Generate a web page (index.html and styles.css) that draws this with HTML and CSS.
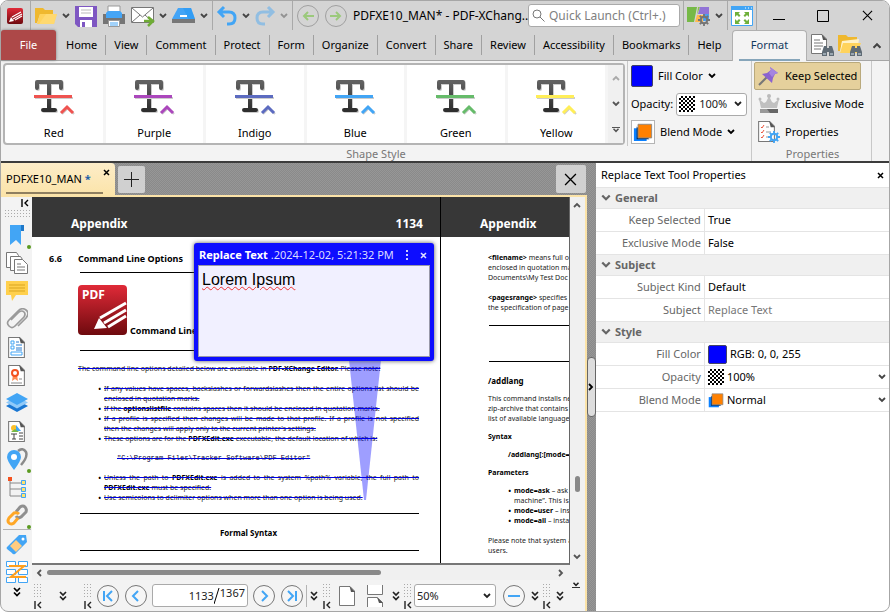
FILE: index.html
```html
<!DOCTYPE html>
<html lang="en">
  <head>
    <meta charset="UTF-8" />
    <meta name="viewport" content="width=device-width, initial-scale=1.0" />
    <title>PDFXE10_MAN* - PDF-XChange Editor</title>
    <link rel="stylesheet" href="styles.css">
  </head>
  <body>
    <!-- shared icons -->
    <svg class="defs" width="0" height="0" aria-hidden="true">
      <linearGradient id="ink" x1="0" y1="0" x2="0" y2="1">
        <stop offset="0" stop-color="#616161"/><stop offset="1" stop-color="#2e2e2e"/>
      </linearGradient>
      <linearGradient id="red" x1="0" y1="0" x2="0" y2="1">
        <stop offset="0" stop-color="#e02a38"/><stop offset="1" stop-color="#6e0a0e"/>
      </linearGradient>
      <symbol id="chev" viewBox="0 0 8 6"><path d="M1 1l3 3 3-3" fill="none" stroke="currentColor" stroke-width="1.8"/></symbol>
      <symbol id="dchev" viewBox="0 0 8 10"><path d="M1 1l3 3 3-3M1 5.500l3 3 3-3" fill="none" stroke="currentColor" stroke-width="1.7"/></symbol>
      <symbol id="first" viewBox="0 0 8 8"><path d="M1 0v8M7 1L4 4l3 3" fill="none" stroke="currentColor" stroke-width="1.4"/></symbol>
      <symbol id="cross" viewBox="0 0 12 12"><path d="M1 1l10 10M11 1L1 11" fill="none" stroke="currentColor" stroke-width="1.2"/></symbol>
      <symbol id="cross-small" viewBox="0 0 7 7"><path d="M1 1l5 5M6 1L1 6" fill="none" stroke="currentColor" stroke-width="1.5"/></symbol>
      <symbol id="glyph" viewBox="0 0 42 38">
        <g fill="none" stroke-linecap="round" stroke-linejoin="round">
          <path d="M4 10V4h24v6M16 4v28M10 32h12" transform="translate(1 1)" stroke="#ccc" stroke-width="4"/>
          <path d="M4 10V4h24v6M16 4v28M10 32h12" stroke="url(#ink)" stroke-width="4"/>
        </g>
        <path d="M2 20h38M29 36l6-6 6 6" fill="none" stroke="#ccc" stroke-width="2"/>
        <path d="M1 18.500h38M28 35l6-6 6 6" fill="none" stroke="currentColor" stroke-width="3"/>
      </symbol>
      <symbol id="binoc" viewBox="0 0 12 11">
        <path d="M2 1h3v2h2V1h3l2 6v4H7V7H5v4H0V7z" fill="#5f6b75"/><path d="M1 8h3v2H1zM8 8h3v2H8z" fill="#9aa7b1"/>
      </symbol>
      <symbol id="page" viewBox="0 0 16 20">
        <path d="M.5.5H11L15.500 5v14.500H.5z" fill="#fff" stroke="#777"/><path d="M10.500 0L16 6h-4z" fill="#555"/>
      </symbol>
      <symbol id="gear" viewBox="0 0 12 12">
        <circle cx="6" cy="6" r="3.200" fill="none" stroke="currentColor" stroke-width="2"/>
        <path d="M6 0v2.500M6 9.500V12M0 6h2.500M9.500 6H12M1.800 1.800l1.700 1.700M8.500 8.500l1.700 1.700M10.200 1.800L8.500 3.500M3.500 8.500l-1.700 1.700" stroke="currentColor" stroke-width="1.800"/>
      </symbol>
      <symbol id="blend" viewBox="0 0 22 22">
        <path d="M1 7h14v14H1z" fill="#0a80ff"/><path d="M4 5v14h14z" fill="#0b3060"/><path d="M5.500 2.500h15v15h-15z" fill="#ff8000" stroke="#888"/>
      </symbol>
    </svg>

    <div class="window">
      <!-- title bar -->
      <header class="titlebar">
        <a href="#" class="brand" aria-label="PDF-XChange Editor">
          <svg width="16" height="16" viewBox="0 0 16 16"><rect width="16" height="16" rx="2" fill="url(#red)"/><path d="M2 14l2-5 3 4z" fill="#fff"/><path d="M5 9l9-5M6 11l9-5M8 12l7-4" stroke="#fff" stroke-width="1.200" fill="none"/></svg>
        </a>
        <div class="quick">
          <button class="tool" aria-label="Open"><svg width="24" height="22" viewBox="0 0 24 22"><path d="M1 3h8l2 2h8v4H6L3 18H1z" fill="#efb82e"/><path d="M6 9h17l-3 10H3z" fill="#ffd35c"/><path d="M12 9h11l-3 10H5z" fill="#ffdf83" opacity=".5"/></svg></button>
          <button class="drop" aria-label="Open options"><svg width="8" height="6"><use href="#chev"/></svg></button>
          <button class="tool" aria-label="Save"><svg width="24" height="24" viewBox="0 0 24 24"><path d="M1 2h22v21H4l-3-3z" fill="#7e57c2"/><path d="M5 3h14v10H5z" fill="#fff"/><path d="M7 6h10M7 9h10" stroke="#bbb"/><path d="M6 16h12v7H6z" fill="#fff"/><path d="M8 18h3v5H8z" fill="#7e57c2"/></svg></button>
          <button class="tool print" aria-label="Print"><svg width="24" height="24" viewBox="0 0 24 24"><path d="M6 2h12v7H6z" fill="#fff" stroke="#999"/><path d="M1 10h22v10H1z" fill="#757575"/><path d="M6 7h12l2 2v5H4V9z" fill="#45a5f5"/><path d="M6.500 16.500h11v6h-11z" fill="#fff" stroke="#999"/><path d="M8 19h8M8 21h8" stroke="#45a5f5"/></svg></button>
          <button class="tool" aria-label="Email"><svg width="25" height="22" viewBox="0 0 25 22"><path d="M1.500 2.500h22v15h-22z" fill="#fff" stroke="#777"/><path d="M2 3l10.500 9L23 3M2 17l8-7M23 17l-8-7" fill="none" stroke="#777"/><path d="M14 16h8M18 12l5 4-5 5" fill="none" stroke="#6fac35" stroke-width="2.500"/></svg></button>
          <button class="drop" aria-label="Email options"><svg width="8" height="6"><use href="#chev"/></svg></button>
          <button class="tool" aria-label="Scan"><svg width="25" height="20" viewBox="0 0 25 20"><path d="M7 2h13l4 11H1z" fill="#43a4f6"/><path d="M12 2h8l4 11-6 1z" fill="#2196f3" opacity=".5"/><path d="M9 10h7" stroke="#fff" stroke-width="2"/><path d="M1 13h23v4H1z" fill="#777"/></svg></button>
          <button class="drop" aria-label="Scan options"><svg width="8" height="6"><use href="#chev"/></svg></button>
        </div>
        <div class="quick">
          <button class="tool" aria-label="Undo"><svg width="22" height="22" viewBox="0 0 22 22"><path d="M8 2L3 7l5 5M4 7h9q6 0 6 6t-6 6h-2" fill="none" stroke="#42a5f5" stroke-width="3"/></svg></button>
          <button class="drop" aria-label="Undo history"><svg width="8" height="6"><use href="#chev"/></svg></button>
          <button class="tool faded" aria-label="Redo"><svg width="22" height="22" viewBox="0 0 22 22"><path d="M14 2l5 5-5 5M18 7H9q-6 0-6 6t6 6h2" fill="none" stroke="#42a5f5" stroke-width="3"/></svg></button>
          <button class="drop faded" aria-label="Redo history"><svg width="8" height="6"><use href="#chev"/></svg></button>
        </div>
        <div class="quick last">
          <button class="round" aria-label="Back"><svg width="12" height="10" viewBox="0 0 12 10"><path d="M12 5H2M6 1L2 5l4 4" fill="none" stroke="#9bc97b" stroke-width="2"/></svg></button>
          <button class="round" aria-label="Forward"><svg width="12" height="10" viewBox="0 0 12 10"><path d="M0 5h10M6 1l4 4-4 4" fill="none" stroke="#9bc97b" stroke-width="2"/></svg></button>
        </div>
        <div class="title">PDFXE10_MAN* - PDF-XChang..</div>
        <label class="search">
          <svg width="13" height="13" viewBox="0 0 13 13"><circle cx="5" cy="5" r="4" fill="none" stroke="#777"/><path d="M8 8l4.500 4.500" stroke="#777"/></svg>
          <input type="text" placeholder="Quick Launch (Ctrl+.)" aria-label="Quick Launch">
        </label>
        <div class="quick looks">
          <button class="tool" aria-label="UI options"><svg width="25" height="22" viewBox="0 0 25 22"><path d="M1 2h10L8 17H1z" fill="#76b947"/><path d="M12 2h2l-3 8z" fill="#8bc34a"/><path d="M14 2h9v7H12z" fill="#9173d6"/><path d="M11 10h6v7H9z" fill="#ffb74d"/><path d="M17 9h6v7h-6z" fill="#4a9ff0"/><svg x="12" y="9" width="12" height="12" color="#757575"><use href="#gear"/></svg></svg></button>
          <button class="drop" aria-label="UI options list"><svg width="8" height="6"><use href="#chev"/></svg></button>
        </div>
        <div class="quick">
          <button class="tool" aria-label="Full screen"><svg width="22" height="20" viewBox="0 0 22 20"><path d="M.5.5h21v19H.5z" fill="#fff" stroke="#42a5f5"/><path d="M0 0h22v4H0z" fill="#42a5f5"/><path d="M14 2h1M17 2h1M20 2h1" stroke="#fff"/><path d="M4 6h5L7.500 7.500l2 2L8 11 6 9l-2 2zM18 6h-5l1.500 1.500-2 2L14 11l2-2 2 2zM4 18h5l-1.500-1.500 2-2L8 13l-2 2-2-2zM18 18h-5l1.500-1.500-2-2L14 13l2 2 2-2z" fill="#6fb03a"/></svg></button>
        </div>
        <div class="winbuttons">
          <button aria-label="Minimize"><svg width="12" height="12"><path d="M0 9.500h12" stroke="#000"/></svg></button>
          <button aria-label="Maximize"><svg width="12" height="12"><path d="M.5.5h11v11H.5z" fill="none" stroke="#000"/></svg></button>
          <button aria-label="Close"><svg width="11" height="11"><use href="#cross"/></svg></button>
        </div>
      </header>

      <!-- ribbon tabs -->
      <nav class="tabs">
        <a href="#" class="file">File</a>
        <div class="tab-list">
          <a href="#">Home</a>
          <a href="#">View</a>
          <a href="#">Comment</a>
          <a href="#">Protect</a>
          <a href="#">Form</a>
          <a href="#">Organize</a>
          <a href="#">Convert</a>
          <a href="#">Share</a>
          <a href="#">Review</a>
          <a href="#">Accessibility</a>
          <a href="#">Bookmarks</a>
          <a href="#">Help</a>
        </div>
        <a href="#" class="active"><span>Format</span></a>
        <div class="tab-tools">
          <button class="tool" aria-label="Find"><svg width="24" height="22" viewBox="0 0 24 22"><svg width="16" height="20"><use href="#page"/></svg><path d="M3 6h6M3 9h9M3 12h9M3 15h7" stroke="#777"/><svg x="11" y="11" width="12" height="11"><use href="#binoc"/></svg></svg></button>
          <button class="tool" aria-label="Search files"><svg width="24" height="22" viewBox="0 0 24 22"><path d="M0 1h8l2 2h9v5H4l-2 9H0z" fill="#efb82e"/><path d="M4 7l17-2-2 13H2z" fill="#fff2c8"/><path d="M5 9h18l-4 10H2z" fill="#ffd35c"/><svg x="12" y="11" width="12" height="11"><use href="#binoc"/></svg></svg></button>
          <button class="drop up" aria-label="Collapse ribbon"><svg width="10" height="7"><use href="#chev"/></svg></button>
        </div>
      </nav>

      <!-- ribbon -->
      <section class="ribbon">
        <div class="group styles">
          <div class="style-row">
            <div class="gallery">
              <button class="swatch red"><svg width="42" height="38"><use href="#glyph"/></svg>Red</button>
              <button class="swatch purple"><svg width="42" height="38"><use href="#glyph"/></svg>Purple</button>
              <button class="swatch indigo"><svg width="42" height="38"><use href="#glyph"/></svg>Indigo</button>
              <button class="swatch blue"><svg width="42" height="38"><use href="#glyph"/></svg>Blue</button>
              <button class="swatch green"><svg width="42" height="38"><use href="#glyph"/></svg>Green</button>
              <button class="swatch yellow"><svg width="42" height="38"><use href="#glyph"/></svg>Yellow</button>
              <div class="gallery-nav">
                <button class="up faded" aria-label="Previous styles"><svg width="8" height="6"><use href="#chev"/></svg></button>
                <button aria-label="Next styles"><svg width="8" height="6"><use href="#chev"/></svg></button>
                <button class="more" aria-label="All styles"><svg width="8" height="6"><use href="#chev"/></svg></button>
              </div>
            </div>
            <div class="paint">
              <button class="item"><span class="fill"></span>Fill Color<svg width="8" height="6"><use href="#chev"/></svg></button>
              <div class="opacity">
                <label for="opacity">Opacity:</label>
                <span class="combo">
                  <span class="checker"></span>
                  <select id="opacity"><option>100%</option></select>
                  <svg width="8" height="6"><use href="#chev"/></svg>
                </span>
              </div>
              <button class="item"><span class="blend"><svg width="20" height="20"><use href="#blend"/></svg></span>Blend Mode<svg width="8" height="6"><use href="#chev"/></svg></button>
            </div>
          </div>
          <div class="group-name">Shape Style</div>
        </div>
        <div class="group props">
          <div class="items">
            <button class="item pressed" aria-pressed="true"><svg width="22" height="20" viewBox="0 0 22 20"><path d="M1 19l8-8" stroke="#777" stroke-width="2"/><path d="M12 1l8 6-3 1-2 4-1 5L4 8l5-1 4-3z" fill="#8b63cf"/><path d="M12 1l8 6-3 1-3 3-3-4 2-3z" fill="#a584e0"/></svg>Keep Selected</button>
            <button class="item"><svg width="22" height="20" viewBox="0 0 22 20"><path d="M3 14L1 5l5 4 2-1 3-6 3 6 2 1 5-4-2 9z" fill="#c0c0c0"/><circle cx="11" cy="2" r="2" fill="#bbb"/><circle cx="2" cy="5" r="1.500" fill="#bbb"/><circle cx="20" cy="5" r="1.500" fill="#bbb"/><path d="M2 15h18v4H2z" fill="#999"/><path d="M9 15h11v4H12z" fill="#666"/></svg>Exclusive Mode</button>
            <button class="item"><svg width="22" height="22" viewBox="0 0 22 22"><svg width="17" height="21"><use href="#page"/></svg><path d="M3 6l1 1 2-3M3 11l1 1 2-3M3 16l1 1 2-3" stroke="#e9573f" fill="none"/><path d="M8 6h3M8 11h5M8 16h4" stroke="#999"/><svg x="10" y="10" width="12" height="12" color="#42a5f5"><use href="#gear"/></svg></svg>Properties</button>
          </div>
          <div class="group-name">Properties</div>
        </div>
      </section>

      <main class="work">
        <div class="docs">
          <div class="doc-tabs">
            <div class="doc-tab"><a href="#">PDFXE10_MAN <b>*</b></a><button aria-label="Close tab"><svg width="7" height="7"><use href="#cross-small"/></svg></button></div>
            <button class="square" aria-label="New tab"><svg width="15" height="15"><path d="M0 7.500h15M7.500 0v15" stroke="#222"/></svg></button>
            <button class="square close" aria-label="Close document"><svg width="13" height="13"><use href="#cross"/></svg></button>
          </div>
          <div class="doc-frame">
            <!-- side panes -->
            <aside class="panes">
              <button class="pin" aria-label="Hide bar"><svg width="8" height="8"><use href="#first"/></svg></button>
              <span class="dots wide"></span>
              <div class="pane-list">
                <button class="dot" aria-label="Bookmarks"><svg width="22" height="22" viewBox="0 0 22 22"><path d="M4 1h11v20l-5-5-6 5z" fill="#42a5f5"/><path d="M15 1h3v6h-3z" fill="#1f78c8"/></svg></button>
                <button aria-label="Thumbnails"><svg width="22" height="22" viewBox="0 0 22 22" fill="#fff" stroke="#777"><path d="M.5 15.500V.5h10l2 3v12z"/><path d="M4.500 18.500v-14h10l2 3v11z"/><path d="M8.500 21.500v-14h8l5 5v9z"/><path d="M11 12h4M11 15h8M11 18h8"/></svg></button>
                <button aria-label="Comments"><svg width="22" height="22" viewBox="0 0 22 22"><path d="M0 1h22v14H10l-4 6-1-6H0z" fill="#ffd04d"/><path d="M3 5h16M3 8h16M3 11h16" stroke="#d9a520"/></svg></button>
                <button aria-label="Attachments"><svg width="22" height="22" viewBox="0 0 22 22"><path d="M5 12l8-8q3-2 5 0t0 5l-9 9q-3 3-6 0t0-6l9-9q4-4 8-1t0 8l-8 8" fill="none" stroke="#9a9a9a" stroke-width="1.700"/></svg></button>
                <button aria-label="Fields"><svg width="17" height="21" viewBox="0 0 17 21"><svg width="17" height="21"><use href="#page"/></svg><path d="M3 4h3v3H3zM3 9h3v3H3zM3 15h11v3H3z" fill="none" stroke="#42a5f5"/><path d="M8 5h3M8 8h6M8 11h6M8 13h6" stroke="#2b7cd0"/></svg></button>
                <button aria-label="Signatures"><svg width="17" height="21" viewBox="0 0 17 21"><svg width="17" height="21"><use href="#page"/></svg><path d="M5 10l-1 6 3-2 3 2-1-6z" fill="#ff8a50"/><circle cx="7" cy="8" r="3" fill="#fff" stroke="#f4511e" stroke-width="2"/><path d="M11 14h3M3 18h11" stroke="#888"/></svg></button>
                <button aria-label="Layers"><svg width="22" height="20" viewBox="0 0 22 20"><path d="M0 13l11 6 11-6-11-6z" fill="#1976d2"/><path d="M0 9.500l11 6 11-6-11-6z" fill="#90caf9"/><path d="M0 6l11 6 11-6-11-6z" fill="#42a5f5"/></svg></button>
                <button aria-label="Content"><svg width="17" height="21" viewBox="0 0 17 21"><svg width="17" height="21"><use href="#page"/></svg><circle cx="6" cy="7" r="3" fill="#fbc02d"/><path d="M8 4l5 6H8z" fill="#42a5f5"/><path d="M3 11l4-3 4 3z" fill="#76b947"/><path d="M3 13h6M6 13v5M4 18h4M11 12h4M11 15h4M11 18h4" stroke="#444"/></svg></button>
                <button class="dot" aria-label="Destinations"><svg width="22" height="22" viewBox="0 0 22 22"><path d="M12 3q5-4 8 1 2 5-5 13" fill="none" stroke="#8a8a8a" stroke-width="2.500"/><path d="M8 22Q1 13 1 9a7 7 0 0 1 14 0q0 4-7 13z" fill="#42a5f5"/><circle cx="8" cy="9" r="3" fill="#fff"/></svg></button>
                <button aria-label="Model tree"><svg width="20" height="22" viewBox="0 0 20 22"><path d="M3 3v17h12M3 7h12M3 13h12" fill="none" stroke="#888"/><path d="M1 1h4v4H1z" fill="#f4511e"/><path d="M14.500 4.500h4v4h-4zM14.500 11.500h4v4h-4zM14.500 17.500h4v4h-4z" fill="#ffe36b" stroke="#42a5f5"/></svg></button>
                <button class="dot" aria-label="Links"><svg width="22" height="22" viewBox="0 0 22 22" fill="none" stroke-width="3"><path d="M10 8l4-5q3-2 5 0t1 5l-5 5q-3 2-5-1" stroke="#8f8f8f"/><path d="M12 14l-4 5q-3 2-5 0t0-5l5-5q3-1 5 1" stroke="#ffa726"/></svg></button>
              </div>
              <div class="pane-list more">
                <button aria-label="Tags"><svg width="22" height="22" viewBox="0 0 22 22"><path d="M1 14L13 2l7 0 1 7L9 21q-2 1-3-1l-5-4q-1-1 0-2z" fill="#42a5f5"/><path d="M4 13l6-6 6 6-6 6z" fill="#ffcc80"/><circle cx="17" cy="6" r="1.500" fill="#fff"/></svg></button>
                <button aria-label="Order"><svg width="22" height="22" viewBox="0 0 22 22"><path d="M.5.500h9v5h-9zM12.500.500h9v5h-9zM.5 8.500h9v5h-9zM12.500 8.500h9v5h-9zM.5 16.500h9v5h-9zM12.500 16.500h9v5h-9z" fill="#fff" stroke="#42a5f5"/><path d="M3 5h15L5 16h15" fill="none" stroke="#ff9f1c" stroke-width="2"/></svg></button>
              </div>
              <button class="drop" aria-label="More panes"><svg width="8" height="10"><use href="#dchev"/></svg></button>
            </aside>

            <div class="viewer">
              <div class="view-row">
                <!-- pages -->
                <div class="pages">
                  <article class="sheet left">
                    <div class="banner"><span>Appendix</span><span>1134</span></div>
                    <div class="body">
                      <h2><span>6.6</span>Command Line Options</h2>
                      <hr>
                      <h3>
                        <svg width="49" height="50" viewBox="0 0 49 50"><rect width="49" height="50" rx="4" fill="url(#red)"/><text x="4" y="14" class="logo-text">PDF</text><path d="M16 44l5-11 8 10z" fill="#fff"/><path d="M22 33l26-15M26 38l22-13M30 42l18-11" stroke="#fff" stroke-width="3"/></svg>
                        Command Line
                      </h3>
                      <hr>
                      <p class="struck intro">The command line options detailed below are available in <b>PDF-XChange Editor.</b> Please note:</p>
                      <ul class="struck">
                        <li><span class="full">If any values have spaces, backslashes or forwardslashes then the entire options list should be</span> enclosed in quotation marks.</li>
                        <li>If the <b>optionslistfile</b> contains spaces then it should be enclosed in quotation marks.</li>
                        <li><span class="full">If a profile is specified then changes will be made to that profile. If a profile is not specified</span> then the changes will apply only to the current printer's settings.</li>
                        <li>These options are for the <b>PDFXEdit.exe</b> executable, the default location of which is:</li>
                      </ul>
                      <code class="struck">"C:\Program Files\Tracker Software\PDF Editor"</code>
                      <ul class="struck">
                        <li><span class="full">Unless the path to <b>PDFXEdit.exe</b> is added to the system %path% variable, the full path to</span> <b>PDFXEdit.exe</b> must be specified.</li>
                        <li>Use semicolons to delimiter options when more than one option is being used.</li>
                      </ul>
                      <hr>
                      <h4>Formal Syntax</h4>
                      <hr>
                    </div>
                    <svg class="pointer" width="32" height="140" viewBox="0 0 32 140"><path d="M0 0h32L17 140h-2z" fill="#00f" fill-opacity=".38"/></svg>
                    <div class="note">
                      <div class="note-head">
                        <b>Replace Text</b><span>.2024-12-02, 5:21:32 PM</span>
                        <button aria-label="Note options"><svg width="3" height="11" fill="#ccf"><path d="M0 0h2v2H0zM0 4h2v2H0zM0 8h2v2H0z"/></svg></button>
                        <button aria-label="Close note"><svg width="7" height="7"><use href="#cross-small"/></svg></button>
                      </div>
                      <textarea aria-label="Note text">Lorem Ipsum</textarea>
                    </div>
                  </article>
                  <article class="sheet right">
                    <div class="banner"><span>Appendix</span></div>
                    <div class="body">
                      <p><b>&lt;filename&gt;</b> means full o<br>enclosed in quotation ma<br>Documents\My Test Doc</p>
                      <p><b>&lt;pagesrange&gt;</b> specifies<br>the specification of page</p>
                      <hr>
                      <hr>
                      <h5 class="cmd">/addlang</h5>
                      <p class="tight">This command installs ne<br>zip-archive that contains<br>list of available language</p>
                      <h5>Syntax</h5>
                      <h5 class="indent">/addlang[:[mode=</h5>
                      <h5>Parameters</h5>
                      <ul>
                        <li><b>mode=ask</b> – ask<br>machine”. This is</li>
                        <li><b>mode=user</b> – ins</li>
                        <li><b>mode=all</b> – insta</li>
                      </ul>
                      <p>Please note that system a<br>users.</p>
                    </div>
                  </article>
                </div>
                <div class="vscroll">
                  <button class="up" aria-label="Scroll up"><svg width="8" height="6"><use href="#chev"/></svg></button>
                  <span class="thumb"></span>
                  <button aria-label="Scroll down"><svg width="8" height="6"><use href="#chev"/></svg></button>
                </div>
              </div>
              <div class="hscroll">
                <button class="to-left" aria-label="Scroll left"><svg width="8" height="6"><use href="#chev"/></svg></button>
                <span class="track"><span class="thumb"></span></span>
                <button class="to-right" aria-label="Scroll right"><svg width="8" height="6"><use href="#chev"/></svg></button>
              </div>
              <!-- page navigation -->
              <footer class="status">
                <span class="grip"><i class="dots"></i><svg width="8" height="8"><use href="#first"/></svg></span>
                <button class="more wide" aria-label="More"><svg width="8" height="10"><use href="#dchev"/></svg></button>
                <span class="grip"><i class="dots"></i><svg width="8" height="8"><use href="#first"/></svg></span>
                <button class="round" aria-label="First page"><svg width="12" height="12"><path d="M2 1v10M10 1L5 6l5 5" fill="none" stroke="#42a5f5" stroke-width="2"/></svg></button>
                <button class="round" aria-label="Previous page"><svg width="12" height="12"><path d="M8 1L3 6l5 5" fill="none" stroke="#42a5f5" stroke-width="2"/></svg></button>
                <label class="page-box"><input type="text" value="1133" aria-label="Page"><svg width="6" height="16"><path d="M0 16L5 0" stroke="#000"/></svg><span>1367</span></label>
                <button class="round" aria-label="Next page"><svg width="12" height="12"><path d="M4 1l5 5-5 5" fill="none" stroke="#42a5f5" stroke-width="2"/></svg></button>
                <button class="round" aria-label="Last page"><svg width="12" height="12"><path d="M10 1v10M2 1l5 5-5 5" fill="none" stroke="#42a5f5" stroke-width="2"/></svg></button>
                <button class="more line" aria-label="More"><svg width="8" height="10"><use href="#dchev"/></svg></button>
                <span class="grip"><i class="dots"></i><svg width="8" height="8"><use href="#first"/></svg></span>
                <button class="layout" aria-label="Single page"><svg width="16" height="20"><use href="#page"/></svg></button>
                <button class="layout" aria-label="Continuous"><svg width="16" height="22"><path d="M.5 0v9.500h15V0M.5 22v-9.500H10l5.500 5V22" fill="#fff" stroke="#777"/><path d="M10 12l6 6h-4z" fill="#555"/></svg></button>
                <button class="more" aria-label="More"><svg width="8" height="10"><use href="#dchev"/></svg></button>
                <span class="grip"><i class="dots"></i><svg width="8" height="8"><use href="#first"/></svg></span>
                <span class="combo zoom">
                  <select aria-label="Zoom"><option>50%</option></select>
                  <svg width="8" height="6"><use href="#chev"/></svg>
                </span>
                <button class="round zoom-out" aria-label="Zoom out"><svg width="12" height="12"><path d="M0 6h12" stroke="#42a5f5" stroke-width="2"/></svg></button>
                <button class="more" aria-label="More"><svg width="8" height="10"><use href="#dchev"/></svg></button>
                <span class="grip"><i class="dots"></i><svg width="8" height="8"><use href="#first"/></svg></span>
                <button class="more end" aria-label="More"><svg width="8" height="10"><use href="#dchev"/></svg></button>
                <button class="dock" aria-label="Dock bar"><svg width="8" height="6"><use href="#chev"/></svg></button>
              </footer>
            </div>
          </div>
        </div>

        <div class="splitter"><button aria-label="Toggle panel"><svg width="8" height="6"><use href="#chev"/></svg></button></div>

        <!-- properties -->
        <aside class="panel">
          <div class="panel-head"><span>Replace Text Tool Properties</span><button aria-label="Close panel"><svg width="7" height="7"><use href="#cross-small"/></svg></button></div>
          <table>
            <colgroup><col class="names"><col></colgroup>
            <tr class="section"><th colspan="2"><svg width="10" height="8"><use href="#chev"/></svg>General</th></tr>
            <tr><th scope="row">Keep Selected</th><td>True</td></tr>
            <tr><th scope="row">Exclusive Mode</th><td>False</td></tr>
            <tr class="section"><th colspan="2"><svg width="10" height="8"><use href="#chev"/></svg>Subject</th></tr>
            <tr><th scope="row">Subject Kind</th><td>Default</td></tr>
            <tr><th scope="row">Subject</th><td class="dim">Replace Text</td></tr>
            <tr class="section"><th colspan="2"><svg width="10" height="8"><use href="#chev"/></svg>Style</th></tr>
            <tr><th scope="row">Fill Color</th><td><div class="value"><span class="fill small"></span>RGB: 0, 0, 255</div></td></tr>
            <tr><th scope="row"><label for="prop-opacity">Opacity</label></th><td><div class="value"><span class="checker"></span><select id="prop-opacity"><option>100%</option></select><svg width="8" height="6"><use href="#chev"/></svg></div></td></tr>
            <tr><th scope="row"><label for="prop-blend">Blend Mode</label></th><td><div class="value"><svg width="16" height="16"><use href="#blend"/></svg><select id="prop-blend"><option>Normal</option></select><svg width="8" height="6"><use href="#chev"/></svg></div></td></tr>
          </table>
        </aside>
      </main>
    </div>
  </body>
</html>
```

FILE: styles.css
```css
* {
  margin: 0;
  padding: 0;
  box-sizing: border-box;
}

body {
  background: #fff;
  font-family: "Noto Sans", "Open Sans", sans-serif;
  font-size: 11px;
  line-height: 16px;
  color: #000;
}

button,
input,
select,
textarea {
  font: inherit;
  color: inherit;
  border: none;
  background: none;
}

button {
  display: flex;
  align-items: center;
  justify-content: center;
  flex: none;
  cursor: pointer;
}

select {
  appearance: none;
  outline: none;
  flex: 1;
  min-width: 0;
}

input {
  outline: none;
  min-width: 0;
}

a {
  color: inherit;
  text-decoration: none;
}

svg {
  display: block;
  flex: none;
}

.defs {
  position: absolute;
}

.window {
  height: 100vh;
  display: flex;
  flex-direction: column;
  border: 1px solid #a6a6a6;
  border-radius: 8px;
  background: #f3f3f3;
  overflow: hidden;
}

.faded {
  opacity: 0.45;
}

.up svg {
  transform: rotate(180deg);
}

.to-left svg {
  transform: rotate(90deg);
}

.to-right svg {
  transform: rotate(-90deg);
}

/* title bar */
.titlebar {
  display: flex;
  align-items: center;
  height: 29px;
  background: #d4d4d4;
  white-space: nowrap;
  font-size: 12px;
}

.brand {
  padding: 0 7px 0 6px;
}

.quick {
  display: flex;
  align-items: center;
  align-self: stretch;
  border-left: 1px solid #a9a9a9;
  padding-left: 3px;
}

.quick .drop {
  width: 16px;
  height: 24px;
  color: #444;
}

.quick .print {
  margin: 0 4px;
}

.quick.last {
  gap: 6px;
  padding: 0 6px 0 4px;
}

.round {
  width: 22px;
  height: 22px;
  border: 1px solid #a0a0a0;
  border-radius: 50%;
}

.title {
  flex: 1;
  min-width: 0;
}

.search {
  display: flex;
  align-items: center;
  gap: 4px;
  width: 152px;
  height: 23px;
  margin-right: 3px;
  padding: 0 3px;
  border: 1px solid #aaa;
  border-radius: 3px;
  background: #fff;
}

.search input {
  flex: 1;
}

.search input::placeholder {
  color: #808080;
}

.quick.looks {
  padding-left: 2px;
}

.winbuttons {
  display: flex;
  align-self: stretch;
  border-left: 1px solid #a9a9a9;
  margin-left: 3px;
}

.winbuttons button {
  width: 44px;
}

/* ribbon tabs */
.tabs {
  display: flex;
  height: 31px;
  background: #d4d4d4;
  border-bottom: 1px solid #a6a6a6;
}

.file {
  flex: none;
  width: 55px;
  line-height: 30px;
  text-align: center;
  color: #fff;
  background: #ad4848;
  border-radius: 3px 3px 0 0;
  box-shadow: 0 0 3px #777;
}

.tab-list {
  display: flex;
  align-items: center;
  flex: 1;
  padding-left: 2px;
}

.tab-list a {
  padding: 0 8px;
  line-height: 20px;
  border-right: 1px solid #a0a0a0;
}

.tab-list a:last-child {
  border: none;
}

.active {
  flex: none;
  width: 75px;
  height: 31px;
  padding: 0 6px;
  text-align: center;
  line-height: 28px;
  color: #123a5e;
  background: #f3f3f3;
  border: 1px solid #b0b0b0;
  border-bottom: none;
  border-radius: 4px 4px 0 0;
}

.active span {
  display: block;
  border-bottom: 2px solid #86a5ba;
}

.tab-tools {
  display: flex;
  align-items: center;
  gap: 3px;
  padding-left: 4px;
}

.tab-tools .drop {
  width: 24px;
  color: #444;
}

/* ribbon */
.ribbon {
  display: flex;
  height: 102px;
  border-bottom: 2px solid #3c3c3c;
}

.group {
  display: flex;
  flex-direction: column;
  flex: none;
  border-right: 1px solid #c8c8c8;
}

.group-name {
  text-align: center;
  color: #777;
  line-height: 16px;
}

.style-row,
.items {
  height: 85px;
}

.style-row {
  display: flex;
}

.gallery {
  display: flex;
  width: 622px;
  margin: 2px 2px 1px;
  border: 2px solid #b4b4b4;
  border-radius: 4px;
  background: #fff;
}

.swatch {
  flex: 1;
  flex-direction: column;
  gap: 9px;
  border-right: 3px solid #f5f5f5;
}

.swatch svg {
  margin-top: 10px;
}

.red svg { color: #ef5350; }
.purple svg { color: #ab47bc; }
.indigo svg { color: #5c6bc0; }
.blue svg { color: #42a5f5; }
.green svg { color: #66bb6a; }
.yellow svg { color: #ffee58; }

.gallery-nav {
  display: flex;
  flex-direction: column;
  width: 15px;
  background: #f0f0f0;
  color: #555;
}

.gallery-nav button {
  flex: 1;
}

.gallery-nav .more svg {
  border-top: 1px solid #555;
}

.paint {
  width: 124px;
  padding: 1px 4px 0 3px;
  border-left: 1px solid #c8c8c8;
}

.item {
  height: 28px;
  gap: 5px;
  white-space: nowrap;
}

.fill {
  width: 22px;
  height: 22px;
  background: #00f;
  border: 1px solid #446;
  border-radius: 2px;
}

.fill.small {
  width: 19px;
  height: 19px;
}

.blend {
  padding: 1px;
  border: 1px solid #b4b4b4;
  background: #fff;
}

.opacity {
  display: flex;
  align-items: center;
  gap: 3px;
  height: 28px;
}

.combo {
  display: flex;
  align-items: center;
  gap: 4px;
  flex: 1;
  min-width: 0;
  height: 23px;
  padding: 0 4px 0 2px;
  border: 1px solid #aaa;
  border-radius: 3px;
  background: #fff;
  color: #222;
}

.combo select {
  height: 20px;
}

.checker {
  flex: none;
  width: 16px;
  height: 16px;
  background: repeating-conic-gradient(#000 0 25%, #fff 0 50%) 0 0 / 4px 4px;
}

.props {
  width: 120px;
  padding-left: 2px;
}

.items {
  padding-top: 1px;
}

.props .item {
  padding: 0 3px;
  border: 1px solid transparent;
}

.props .item.pressed {
  background: #e5d09c;
  border-color: #b9a97c;
  border-radius: 2px;
}

/* work area */
.work {
  display: flex;
  flex: 1;
  min-height: 0;
  background: repeating-conic-gradient(#8a8a8a 0 25%, #979797 0 50%) 0 0 / 2px 2px;
}

.docs {
  display: flex;
  flex-direction: column;
  flex: 1;
  min-width: 0;
}

.doc-tabs {
  display: flex;
  align-items: flex-start;
  gap: 3px;
  height: 32px;
  padding-right: 1px;
}

.doc-tab {
  display: flex;
  align-items: flex-start;
  width: 114px;
  height: 33px;
  padding: 4px 5px 0;
  background: linear-gradient(#fdedc8, #fbe3a8);
  border-radius: 0 4px 0 0;
}

.doc-tab a {
  flex: 1;
  height: 27px;
  line-height: 24px;
  white-space: nowrap;
  border-bottom: 2px solid #8f7f60;
}

.doc-tab b {
  color: #1e5fa8;
}

.doc-tab button {
  height: 10px;
}

.square {
  width: 27px;
  height: 27px;
  margin-top: 3px;
  background: #d0d0d0;
  border-radius: 2px;
}

.square.close {
  width: 30px;
  height: 28px;
  margin: 2px 0 0 auto;
}

.doc-frame {
  display: flex;
  flex: 1;
  min-height: 0;
  border: solid #fbe3a8;
  border-width: 2px 2px 0 0;
  background: #f3f3f3;
}

.panes {
  display: flex;
  flex-direction: column;
  align-items: center;
  flex: none;
  width: 31px;
}

.pin {
  align-self: flex-end;
  width: 14px;
  height: 11px;
}

.dots {
  display: block;
  width: 10px;
  height: 16px;
  background: radial-gradient(#aaa 1px, transparent 1px) 0 0 / 3px 3px;
}

.dots.wide {
  width: 26px;
  height: 9px;
  margin: 1px 0 3px;
}

.pane-list button {
  position: relative;
  width: 28px;
  height: 28px;
}

.pane-list.more {
  border-top: 1px solid #b4b4b4;
}

.pane-list .dot::after {
  content: '';
  position: absolute;
  right: 0;
  bottom: 0;
  width: 4px;
  height: 4px;
  border-radius: 50%;
  background: #5a9a1f;
}

.panes .drop {
  height: 12px;
}

.viewer {
  display: flex;
  flex-direction: column;
  flex: 1;
  min-width: 0;
}

.view-row {
  display: flex;
  flex: 1;
  min-height: 0;
}

.pages {
  display: flex;
  flex: 1;
  min-width: 0;
  overflow: hidden;
  background: #fff;
  border-right: 1px solid #666;
  border-bottom: 2px solid #777;
}

.sheet {
  position: relative;
  flex: none;
  width: 409px;
  font-size: 7px;
  line-height: 10px;
  white-space: nowrap;
  color: #222;
}

.sheet.left {
  border-right: 1px solid #000;
}

.sheet b,
.sheet h2,
.sheet h3,
.sheet h4,
.sheet h5 {
  color: #000;
}

.banner {
  display: flex;
  justify-content: space-between;
  height: 40px;
  padding: 19px 17px 0 39px;
  background: #373737;
  color: #fff;
  font-size: 12px;
  line-height: 16px;
  font-weight: bold;
}

.left .body {
  padding: 15px 21px 0 46px;
}

.left h2 {
  display: flex;
  font-size: 9px;
  line-height: 14px;
  margin-left: -29px;
}

.left h2 span {
  width: 29px;
}

.sheet hr {
  border: none;
  border-top: 1px solid #000;
  margin: 6px 0 12px 2px;
}

.left h3 {
  display: flex;
  align-items: flex-end;
  gap: 3px;
  font-size: 9px;
  line-height: 8px;
  margin-bottom: 15px;
}

.logo-text {
  font-size: 12px;
  font-weight: bold;
  fill: #fff;
}

.struck {
  text-decoration: line-through #0000e0 1px;
}

.left .intro {
  padding-top: 1px;
  margin-bottom: 10px;
}

.sheet ul {
  list-style: none;
  margin-bottom: 10px;
  padding-left: 26px;
}

.sheet li {
  position: relative;
}

.sheet li::before {
  content: '•';
  position: absolute;
  left: -6px;
  font-size: 9px;
  color: #000;
}

.full {
  display: block;
  text-align-last: justify;
}

.sheet code {
  display: block;
  margin: -1px 0 10px 39px;
  font-family: "Liberation Mono", monospace;
  font-size: 7px;
  color: #003;
}

.left h4 {
  text-align: center;
  font-size: 8px;
  padding: 2px 0 6px;
}

.pointer {
  position: absolute;
  left: 317px;
  top: 163px;
}

.note {
  position: absolute;
  left: 162px;
  top: 46px;
  width: 240px;
  height: 118px;
  display: flex;
  flex-direction: column;
  padding: 2px 4px 4px;
  background: #0d0dff;
  border-radius: 3px;
  box-shadow: 0 0 4px #555;
}

.note-head {
  display: flex;
  align-items: center;
  gap: 3px;
  height: 20px;
  padding-left: 1px;
  font-size: 11px;
  color: #dcdcff;
}

.note-head b {
  color: #fff;
}

.note-head button {
  width: 13px;
}

.note-head span {
  flex: 1;
}

.note textarea {
  flex: 1;
  width: 100%;
  padding: 4px 3px;
  border: 1px solid #99a;
  background: #f1f0ff;
  font-family: "Liberation Sans", Arial, sans-serif;
  font-size: 16px;
  line-height: 20px;
  resize: none;
  outline: none;
  color: #000;
  text-decoration: underline wavy #e33 1px;
}

.right .body {
  padding: 16px 0 0 47px;
}

.right p {
  margin-bottom: 10px;
}

.right hr {
  margin: 12px 0 35px 1px;
}

.right hr + hr {
  margin: 0 0 14px 1px;
}

.right h5 {
  font-size: 7px;
  line-height: 10px;
  margin-bottom: 8px;
}

.right .cmd {
  font-size: 8px;
}

.right .tight {
  margin-bottom: 8px;
}

.right .indent {
  padding-left: 20px;
}

/* scroll bars */
.vscroll {
  display: flex;
  flex-direction: column;
  align-items: center;
  width: 15px;
  padding: 5px 0;
  background: #f0f0f0;
  color: #555;
}

.thumb {
  display: block;
  background: #888;
  border-radius: 3px;
}

.vscroll .thumb {
  width: 5px;
  height: 16px;
  margin: auto 0 62px;
}

.hscroll {
  display: flex;
  align-items: center;
  height: 15px;
  padding: 0 20px 0 3px;
  background: #f0f0f0;
  color: #555;
}

.track {
  flex: 1;
  padding: 0 4px;
}

.hscroll .thumb {
  width: 66%;
  height: 5px;
}

/* status bar */
.status {
  display: flex;
  align-items: center;
  height: 31px;
  overflow: hidden;
  color: #222;
}

.grip {
  display: flex;
  flex-direction: column;
  align-items: center;
  gap: 2px;
  flex: none;
  width: 12px;
}

.status .more {
  width: 13px;
  height: 22px;
}

.status .more.wide {
  width: 38px;
}

.status .more.line {
  width: 15px;
  border-left: 1px solid #b4b4b4;
}

.status .more.end {
  margin-left: auto;
}

.status .round {
  margin: 0 3px;
  border-color: #777;
  background: #f6f6f6;
}

.status .zoom-out {
  margin-left: 7px;
}

.page-box {
  display: flex;
  align-items: center;
  flex: none;
  width: 96px;
  height: 23px;
  margin: 0 2px;
  padding: 0 2px;
  border: 1px solid #aaa;
  border-radius: 3px;
  background: #fff;
}

.page-box input {
  flex: 1;
  text-align: right;
}

.page-box span {
  line-height: 12px;
  align-self: flex-start;
  padding-top: 2px;
}

.layout {
  width: 28px;
}

.combo.zoom {
  flex: none;
  width: 82px;
}

.dock {
  align-self: flex-start;
  width: 18px;
  height: 10px;
}

.dock svg {
  border-bottom: 1px solid #333;
}

.splitter {
  display: flex;
  align-items: center;
  justify-content: center;
  flex: none;
  width: 9px;
}

.splitter button {
  width: 9px;
  height: 60px;
  background: #ddd;
  border: 1px solid #666;
  border-radius: 4px;
}

.splitter svg {
  transform: rotate(-90deg);
}

/* properties panel */
.panel {
  width: 33%;
  background: #fff;
}

.panel-head {
  display: flex;
  align-items: center;
  justify-content: space-between;
  height: 24px;
  padding: 0 5px;
}

.panel-head button {
  height: 20px;
}

.panel table {
  width: 100%;
  border-collapse: collapse;
  table-layout: fixed;
}

.names {
  width: 37%;
}

.panel tr {
  height: 23px;
  border-top: 1px solid #e4e4e4;
}

.panel tr:last-child {
  border-bottom: 1px solid #e4e4e4;
}

.panel th,
.panel td {
  padding: 0 3px;
  text-align: left;
}

.panel th {
  text-align: right;
  font-weight: normal;
  color: #666;
}

.panel td {
  border-left: 1px solid #e4e4e4;
}

.panel .section {
  height: 21px;
  background: #f0f0f0;
}

.panel .section th {
  text-align: left;
  font-weight: bold;
}

.section svg {
  display: inline-block;
  margin: 0 4px 0 2px;
}

.panel .dim {
  color: #777;
}

.value {
  display: flex;
  align-items: center;
  gap: 3px;
}

.value > svg:last-child {
  color: #444;
}
```
